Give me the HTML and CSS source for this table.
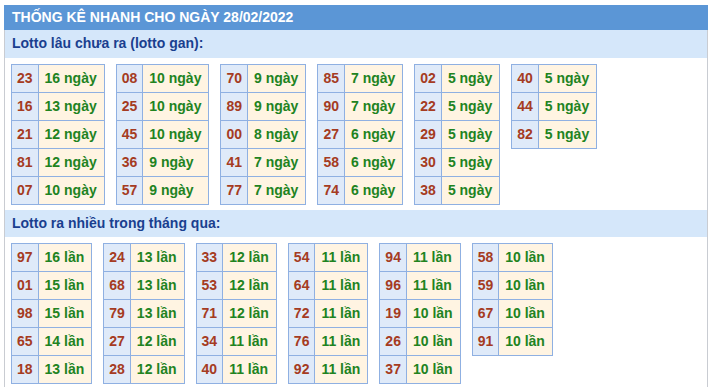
FILE: index.html
```html
<!DOCTYPE html>
<html lang="vi">
<head>
<meta charset="utf-8">
<title>Thống kê nhanh</title>
<link rel="stylesheet" href="styles.css">
</head>
<body>
<div class="box">
  <div class="head">THỐNG KÊ NHANH CHO NGÀY 28/02/2022</div>
  <div class="sub">Lotto lâu chưa ra (lotto gan):</div>
  <div class="tables">
    <table><tr><td class="n">23</td><td class="v">16 ngày</td></tr><tr><td class="n">16</td><td class="v">13 ngày</td></tr><tr><td class="n">21</td><td class="v">12 ngày</td></tr><tr><td class="n">81</td><td class="v">12 ngày</td></tr><tr><td class="n">07</td><td class="v">10 ngày</td></tr></table>
    <table><tr><td class="n">08</td><td class="v">10 ngày</td></tr><tr><td class="n">25</td><td class="v">10 ngày</td></tr><tr><td class="n">45</td><td class="v">10 ngày</td></tr><tr><td class="n">36</td><td class="v">9 ngày</td></tr><tr><td class="n">57</td><td class="v">9 ngày</td></tr></table>
    <table><tr><td class="n">70</td><td class="v">9 ngày</td></tr><tr><td class="n">89</td><td class="v">9 ngày</td></tr><tr><td class="n">00</td><td class="v">8 ngày</td></tr><tr><td class="n">41</td><td class="v">7 ngày</td></tr><tr><td class="n">77</td><td class="v">7 ngày</td></tr></table>
    <table><tr><td class="n">85</td><td class="v">7 ngày</td></tr><tr><td class="n">90</td><td class="v">7 ngày</td></tr><tr><td class="n">27</td><td class="v">6 ngày</td></tr><tr><td class="n">58</td><td class="v">6 ngày</td></tr><tr><td class="n">74</td><td class="v">6 ngày</td></tr></table>
    <table><tr><td class="n">02</td><td class="v">5 ngày</td></tr><tr><td class="n">22</td><td class="v">5 ngày</td></tr><tr><td class="n">29</td><td class="v">5 ngày</td></tr><tr><td class="n">30</td><td class="v">5 ngày</td></tr><tr><td class="n">38</td><td class="v">5 ngày</td></tr></table>
    <table><tr><td class="n">40</td><td class="v">5 ngày</td></tr><tr><td class="n">44</td><td class="v">5 ngày</td></tr><tr><td class="n">82</td><td class="v">5 ngày</td></tr></table>
  </div>
  <div class="sub sub2">Lotto ra nhiều trong tháng qua:</div>
  <div class="tables">
    <table><tr><td class="n">97</td><td class="v">16 lần</td></tr><tr><td class="n">01</td><td class="v">15 lần</td></tr><tr><td class="n">98</td><td class="v">15 lần</td></tr><tr><td class="n">65</td><td class="v">14 lần</td></tr><tr><td class="n">18</td><td class="v">13 lần</td></tr></table>
    <table><tr><td class="n">24</td><td class="v">13 lần</td></tr><tr><td class="n">68</td><td class="v">13 lần</td></tr><tr><td class="n">79</td><td class="v">13 lần</td></tr><tr><td class="n">27</td><td class="v">12 lần</td></tr><tr><td class="n">28</td><td class="v">12 lần</td></tr></table>
    <table><tr><td class="n">33</td><td class="v">12 lần</td></tr><tr><td class="n">53</td><td class="v">12 lần</td></tr><tr><td class="n">71</td><td class="v">12 lần</td></tr><tr><td class="n">34</td><td class="v">11 lần</td></tr><tr><td class="n">40</td><td class="v">11 lần</td></tr></table>
    <table><tr><td class="n">54</td><td class="v">11 lần</td></tr><tr><td class="n">64</td><td class="v">11 lần</td></tr><tr><td class="n">72</td><td class="v">11 lần</td></tr><tr><td class="n">76</td><td class="v">11 lần</td></tr><tr><td class="n">92</td><td class="v">11 lần</td></tr></table>
    <table><tr><td class="n">94</td><td class="v">11 lần</td></tr><tr><td class="n">96</td><td class="v">11 lần</td></tr><tr><td class="n">19</td><td class="v">10 lần</td></tr><tr><td class="n">26</td><td class="v">10 lần</td></tr><tr><td class="n">37</td><td class="v">10 lần</td></tr></table>
    <table><tr><td class="n">58</td><td class="v">10 lần</td></tr><tr><td class="n">59</td><td class="v">10 lần</td></tr><tr><td class="n">67</td><td class="v">10 lần</td></tr><tr><td class="n">91</td><td class="v">10 lần</td></tr></table>
  </div>
</div>
</body>
</html>
```
FILE: styles.css
```css
html, body {
  margin: 0;
  padding: 0;
  background: #fff;
}
body {
  font-family: "Liberation Sans", Arial, sans-serif;
  font-size: 14px;
  font-weight: bold;
}
.box {
  margin: 5px 0 0 4px;
  width: 702px;
  height: 382px;
  border-left: 1px solid #c9ccd2;
  border-right: 1px solid #c9ccd2;
}
.head {
  margin: 0 -1px;
  height: 25px;
  line-height: 25px;
  padding-left: 8px;
  background: #5b96d6;
  color: #fff;
}
.sub {
  height: 28px;
  line-height: 27px;
  padding-left: 7px;
  background: #d5e7fa;
  color: #1a3f8f;
}
.sub2 {
  height: 27px;
  margin-top: 5px;
}
.tables {
  display: flex;
  align-items: flex-start;
  gap: 11px;
  padding: 6px 0 0 6px;
}
table {
  border-collapse: collapse;
}
td {
  border: 1px solid #8fb0e2;
  height: 27px;
  padding: 0 5px;
  line-height: 27px;
  white-space: nowrap;
}
td.n {
  background: #dfeaf9;
  color: #a53b22;
  text-align: center;
}
td.v {
  background: #fff4e2;
  color: #21831f;
  padding: 0 7px 0 6px;
}
```
